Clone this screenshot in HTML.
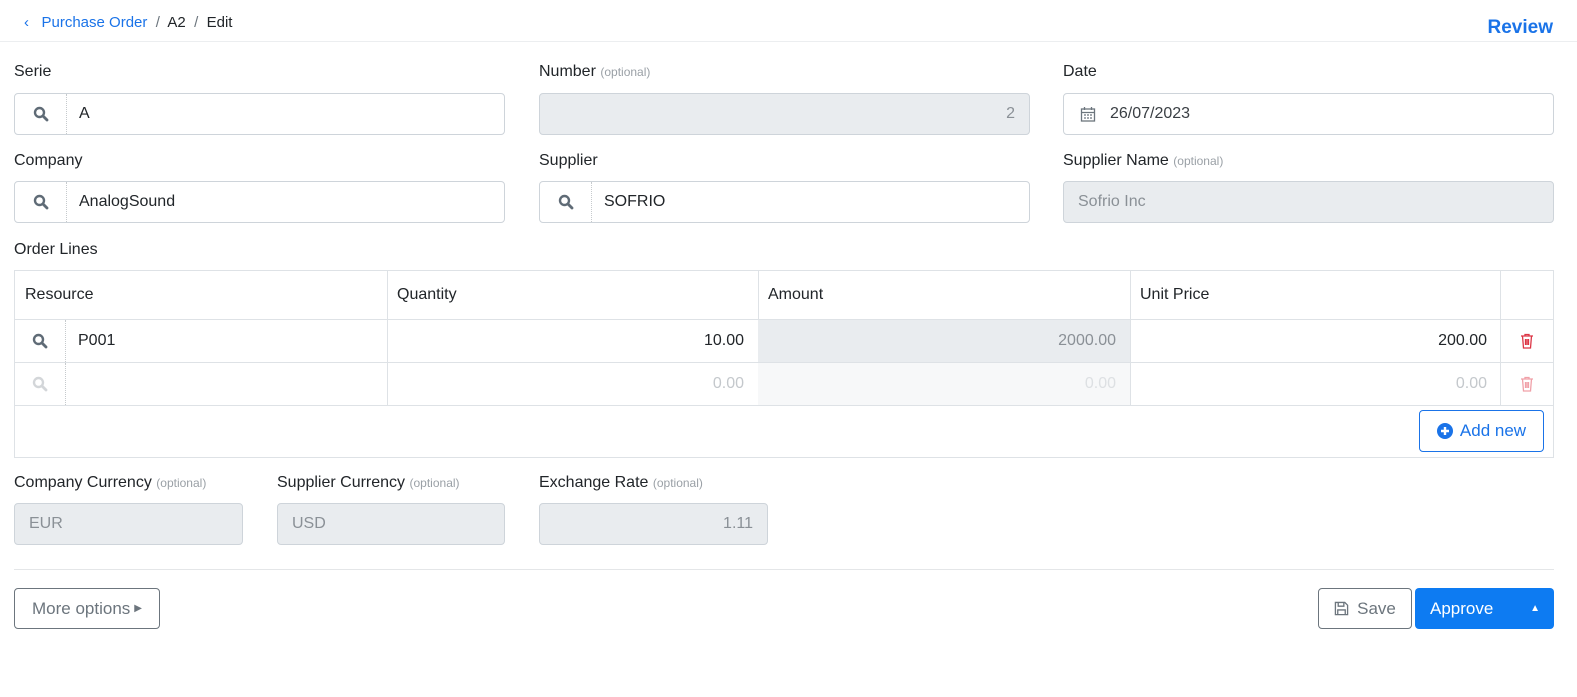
<!DOCTYPE html>
<html><head><style>
*{box-sizing:border-box;margin:0;padding:0}
body{width:1577px;height:697px;background:#fff;font-family:"Liberation Sans",sans-serif;color:#212529;position:relative;overflow:hidden;font-size:16px}
.a{position:absolute}
.lbl{position:absolute;font-size:16px;color:#212529}
.opt{font-size:12px;color:#9aa0a6}
.inp{position:absolute;height:42px;border:1px solid #ced4da;border-radius:4px;background:#fff;display:flex;align-items:center;font-size:16px}
.dis{background:#e9ecef;color:#8a9096}
.srch{width:52px;height:100%;display:flex;align-items:center;justify-content:center;border-right:1px dotted #c6cacd}
.tv{padding-left:12px}
.cell{position:absolute;border-right:1px solid #dee2e6;border-bottom:1px solid #dee2e6;display:flex;align-items:center;font-size:16px}
.btn{position:absolute;border-radius:4px;display:flex;align-items:center;justify-content:center;font-size:17px}
</style></head><body>
<div class="a" style="left:24px;top:14px;font-size:15px;color:#1a73e8">‹&nbsp;&nbsp; Purchase Order <span style="color:#6c757d">&nbsp;/&nbsp;</span> <span style="color:#212529">A2</span> <span style="color:#6c757d">&nbsp;/&nbsp;</span> <span style="color:#212529">Edit</span></div>
<div class="a" style="right:24px;top:17px;font-size:19px;font-weight:bold;color:#1a73e8">Review</div>
<div class="a" style="left:0;top:41px;width:1577px;height:1px;background:#eceef0"></div>

<svg width="0" height="0" style="position:absolute"><defs><symbol id="s" viewBox="0 0 16 16"><circle cx="6.5" cy="6.5" r="4.5" fill="none" stroke="currentColor" stroke-width="2.4"/><path d="M10 10l4 4" stroke="currentColor" stroke-width="2.8" stroke-linecap="round"/></symbol>
<symbol id="t" viewBox="0 0 14 16"><path d="M1 3h12M5 3V1.5h4V3M2.5 3l1 12h7l1-12M5.5 6v6M7 6v6M8.5 6v6" fill="none" stroke="currentColor" stroke-width="1.3"/></symbol></defs></svg>

<div class="lbl" style="left:14px;top:63px">Serie</div>
<div class="inp" style="left:14px;top:93px;width:491px"><div class="srch"><svg width="16" height="16" style="color:#5f6b76"><use href="#s"/></svg></div><span class="tv">A</span></div>
<div class="lbl" style="left:539px;top:63px">Number <span class="opt">(optional)</span></div>
<div class="inp dis" style="left:539px;top:93px;width:491px;justify-content:flex-end;padding-right:14px">2</div>
<div class="lbl" style="left:1063px;top:63px">Date</div>
<div class="inp" style="left:1063px;top:93px;width:491px;padding-left:16px"><svg width="16" height="16" viewBox="0 0 16 16"><rect x="1.5" y="3" width="13" height="12" fill="none" stroke="#6c757d" stroke-width="1.3"/><path d="M1.5 6.5h13M4.5 1v3M11.5 1v3M4 9h2M7 9h2M10 9h2M4 12h2M7 12h2M10 12h2" stroke="#6c757d" stroke-width="1.3"/></svg><span style="padding-left:14px;color:#3a3f44">26/07/2023</span></div>

<div class="lbl" style="left:14px;top:152px">Company</div>
<div class="inp" style="left:14px;top:181px;width:491px"><div class="srch"><svg width="16" height="16" style="color:#5f6b76"><use href="#s"/></svg></div><span class="tv">AnalogSound</span></div>
<div class="lbl" style="left:539px;top:152px">Supplier</div>
<div class="inp" style="left:539px;top:181px;width:491px"><div class="srch"><svg width="16" height="16" style="color:#5f6b76"><use href="#s"/></svg></div><span class="tv">SOFRIO</span></div>
<div class="lbl" style="left:1063px;top:152px">Supplier Name <span class="opt">(optional)</span></div>
<div class="inp dis" style="left:1063px;top:181px;width:491px;padding-left:14px">Sofrio Inc</div>

<div class="lbl" style="left:14px;top:241px">Order Lines</div>
<div class="a" style="left:14px;top:270px;width:1540px;height:188px;border:1px solid #dee2e6"></div>
<div class="cell" style="left:14px;top:270px;width:374px;height:50px;padding-left:11px">Resource</div>
<div class="cell" style="left:387px;top:270px;width:372px;height:50px;padding-left:10px">Quantity</div>
<div class="cell" style="left:758px;top:270px;width:373px;height:50px;padding-left:10px">Amount</div>
<div class="cell" style="left:1130px;top:270px;width:371px;height:50px;padding-left:10px">Unit Price</div>
<div class="cell" style="left:1500px;top:270px;width:54px;height:50px;border-right:none"></div>
<div class="a" style="left:14px;top:319px;width:1540px;height:1px;background:#dee2e6"></div>

<div class="cell" style="left:14px;top:320px;width:374px;height:43px"><div class="srch"><svg width="16" height="16" style="color:#5f6b76"><use href="#s"/></svg></div><span class="tv">P001</span></div>
<div class="cell" style="left:387px;top:320px;width:372px;height:43px;justify-content:flex-end;padding-right:14px">10.00</div>
<div class="cell" style="left:758px;top:320px;width:373px;height:43px;justify-content:flex-end;padding-right:14px;background:#e9ecef;color:#8a9096">2000.00</div>
<div class="cell" style="left:1130px;top:320px;width:371px;height:43px;justify-content:flex-end;padding-right:13px">200.00</div>
<div class="cell" style="left:1500px;top:320px;width:54px;height:43px;border-right:none;justify-content:center"><svg width="14" height="16" style="color:#dc3545"><use href="#t"/></svg></div>

<div class="cell" style="left:14px;top:363px;width:374px;height:43px"><div class="srch"><svg width="16" height="16" style="color:#d3d6d9"><use href="#s"/></svg></div></div>
<div class="cell" style="left:387px;top:363px;width:372px;height:43px;justify-content:flex-end;padding-right:14px;color:#c4c8cc">0.00</div>
<div class="cell" style="left:758px;top:363px;width:373px;height:43px;justify-content:flex-end;padding-right:14px;background:#f7f8f9;color:#dde0e3">0.00</div>
<div class="cell" style="left:1130px;top:363px;width:371px;height:43px;justify-content:flex-end;padding-right:13px;color:#c4c8cc">0.00</div>
<div class="cell" style="left:1500px;top:363px;width:54px;height:43px;border-right:none;justify-content:center"><svg width="14" height="16" style="color:#f0a0a8"><use href="#t"/></svg></div>

<div class="btn" style="left:1419px;top:410px;width:125px;height:42px;border:1px solid #1a73e8;color:#1a73e8"><svg width="16" height="16" viewBox="0 0 16 16" style="margin-right:7px"><circle cx="8" cy="8" r="8" fill="#1a73e8"/><path d="M8 4v8M4 8h8" stroke="#fff" stroke-width="2.4"/></svg>Add new</div>

<div class="lbl" style="left:14px;top:474px">Company Currency <span class="opt">(optional)</span></div>
<div class="inp dis" style="left:14px;top:503px;width:229px;padding-left:14px">EUR</div>
<div class="lbl" style="left:277px;top:474px">Supplier Currency <span class="opt">(optional)</span></div>
<div class="inp dis" style="left:277px;top:503px;width:228px;padding-left:14px">USD</div>
<div class="lbl" style="left:539px;top:474px">Exchange Rate <span class="opt">(optional)</span></div>
<div class="inp dis" style="left:539px;top:503px;width:229px;justify-content:flex-end;padding-right:14px">1.11</div>

<div class="a" style="left:14px;top:569px;width:1540px;height:1px;background:#e4e6e8"></div>
<div class="btn" style="left:14px;top:588px;width:146px;height:41px;border:1px solid #6c757d;color:#6c757d">More options <span style="font-size:10px;margin-left:4px">▶</span></div>
<div class="btn" style="left:1318px;top:588px;width:94px;height:41px;border:1px solid #6c757d;color:#6c757d"><svg width="15" height="15" viewBox="0 0 16 16" style="margin-right:8px"><path d="M1.5 1.5h10l3 3v10h-13z M4.5 1.5v4h6v-4 M4 14.5v-5h8v5" fill="none" stroke="#6c757d" stroke-width="1.4"/></svg>Save</div>
<div class="btn" style="left:1415px;top:588px;width:139px;height:41px;background:#0d7bf2;color:#fff;justify-content:flex-start;padding-left:15px">Approve<span style="position:absolute;right:14px;font-size:10px">▲</span></div>
</body></html>
